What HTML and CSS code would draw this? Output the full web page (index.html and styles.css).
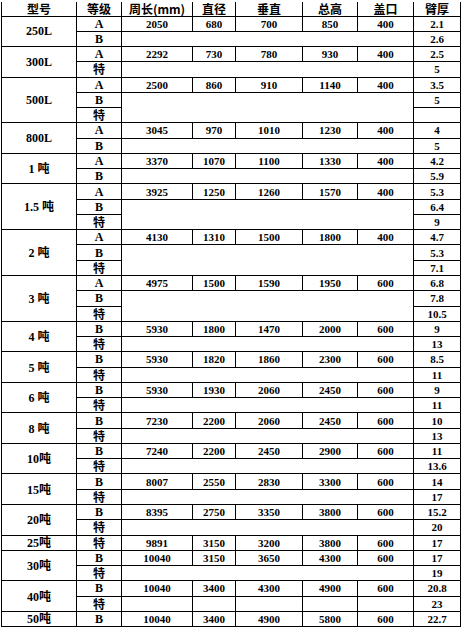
FILE: index.html
```html
<!DOCTYPE html>
<html lang="zh">
<head>
<meta charset="utf-8">
<title>规格表</title>
<link rel="stylesheet" href="styles.css">
</head>
<body>
<table class="spec">
<colgroup>
<col class="c1"><col class="c2"><col class="c3"><col class="c4"><col class="c5"><col class="c6"><col class="c7"><col class="c8">
</colgroup>
<thead>
<tr class="head"><th>型号</th><th>等级</th><th>周长(mm)</th><th>直径</th><th>垂直</th><th>总高</th><th>盖口</th><th>臂厚</th></tr>
</thead>
<tbody>
<tr><td class="m" rowspan="2">250L</td><td class="g">A</td><td>2050</td><td>680</td><td>700</td><td>850</td><td>400</td><td>2.1</td></tr>
<tr><td class="g">B</td><td colspan="5"></td><td>2.6</td></tr>

<tr><td class="m" rowspan="2">300L</td><td class="g">A</td><td>2292</td><td>730</td><td>780</td><td>930</td><td>400</td><td>2.5</td></tr>
<tr><td class="g t">特</td><td colspan="5"></td><td>5</td></tr>

<tr><td class="m" rowspan="3">500L</td><td class="g">A</td><td>2500</td><td>860</td><td>910</td><td>1140</td><td>400</td><td>3.5</td></tr>
<tr><td class="g">B</td><td colspan="5" rowspan="2"></td><td>5</td></tr>
<tr><td class="g t">特</td><td></td></tr>

<tr><td class="m" rowspan="2">800L</td><td class="g">A</td><td>3045</td><td>970</td><td>1010</td><td>1230</td><td>400</td><td>4</td></tr>
<tr><td class="g">B</td><td colspan="5"></td><td>5</td></tr>

<tr><td class="m" rowspan="2">1 <span class="t">吨</span></td><td class="g">A</td><td>3370</td><td>1070</td><td>1100</td><td>1330</td><td>400</td><td>4.2</td></tr>
<tr><td class="g">B</td><td colspan="5"></td><td>5.9</td></tr>

<tr><td class="m" rowspan="3">1.5 <span class="t">吨</span></td><td class="g">A</td><td>3925</td><td>1250</td><td>1260</td><td>1570</td><td>400</td><td>5.3</td></tr>
<tr><td class="g">B</td><td colspan="5" rowspan="2"></td><td>6.4</td></tr>
<tr><td class="g t">特</td><td>9</td></tr>

<tr><td class="m" rowspan="3">2 <span class="t">吨</span></td><td class="g">A</td><td>4130</td><td>1310</td><td>1500</td><td>1800</td><td>400</td><td>4.7</td></tr>
<tr><td class="g">B</td><td colspan="5" rowspan="2"></td><td>5.3</td></tr>
<tr><td class="g t">特</td><td>7.1</td></tr>

<tr><td class="m" rowspan="3">3 <span class="t">吨</span></td><td class="g">A</td><td>4975</td><td>1500</td><td>1590</td><td>1950</td><td>600</td><td>6.8</td></tr>
<tr><td class="g">B</td><td colspan="5" rowspan="2"></td><td>7.8</td></tr>
<tr><td class="g t">特</td><td>10.5</td></tr>

<tr><td class="m" rowspan="2">4 <span class="t">吨</span></td><td class="g">B</td><td>5930</td><td>1800</td><td>1470</td><td>2000</td><td>600</td><td>9</td></tr>
<tr><td class="g t">特</td><td colspan="5"></td><td>13</td></tr>

<tr><td class="m" rowspan="2">5 <span class="t">吨</span></td><td class="g">B</td><td>5930</td><td>1820</td><td>1860</td><td>2300</td><td>600</td><td>8.5</td></tr>
<tr><td class="g t">特</td><td colspan="5"></td><td>11</td></tr>

<tr><td class="m" rowspan="2">6 <span class="t">吨</span></td><td class="g">B</td><td>5930</td><td>1930</td><td>2060</td><td>2450</td><td>600</td><td>9</td></tr>
<tr><td class="g t">特</td><td colspan="5"></td><td>11</td></tr>

<tr><td class="m" rowspan="2">8 <span class="t">吨</span></td><td class="g">B</td><td>7230</td><td>2200</td><td>2060</td><td>2450</td><td>600</td><td>10</td></tr>
<tr><td class="g t">特</td><td colspan="5"></td><td>13</td></tr>

<tr><td class="m" rowspan="2">10<span class="t">吨</span></td><td class="g">B</td><td>7240</td><td>2200</td><td>2450</td><td>2900</td><td>600</td><td>11</td></tr>
<tr><td class="g t">特</td><td colspan="5"></td><td>13.6</td></tr>

<tr><td class="m" rowspan="2">15<span class="t">吨</span></td><td class="g">B</td><td>8007</td><td>2550</td><td>2830</td><td>3300</td><td>600</td><td>14</td></tr>
<tr><td class="g t">特</td><td colspan="5"></td><td>17</td></tr>

<tr><td class="m" rowspan="2">20<span class="t">吨</span></td><td class="g">B</td><td>8395</td><td>2750</td><td>3350</td><td>3800</td><td>600</td><td>15.2</td></tr>
<tr><td class="g t">特</td><td colspan="5"></td><td>20</td></tr>

<tr><td class="m">25<span class="t">吨</span></td><td class="g t">特</td><td>9891</td><td>3150</td><td>3200</td><td>3800</td><td>600</td><td>17</td></tr>

<tr><td class="m" rowspan="2">30<span class="t">吨</span></td><td class="g">B</td><td>10040</td><td>3150</td><td>3650</td><td>4300</td><td>600</td><td>17</td></tr>
<tr><td class="g t">特</td><td colspan="5"></td><td>19</td></tr>

<tr><td class="m" rowspan="2">40<span class="t">吨</span></td><td class="g">B</td><td>10040</td><td>3400</td><td>4300</td><td>4900</td><td>600</td><td>20.8</td></tr>
<tr><td class="g t">特</td><td></td><td></td><td></td><td></td><td></td><td>23</td></tr>

<tr><td class="m">50<span class="t">吨</span></td><td class="g">B</td><td>10040</td><td>3400</td><td>4900</td><td>5800</td><td>600</td><td>22.7</td></tr>
</tbody>
</table>
</body>
</html>
```
FILE: styles.css
```css
html, body {
  margin: 0;
  padding: 0;
  background: #ffffff;
}

.spec {
  margin: 2px 0 0 1px;
  width: 460px;
  table-layout: fixed;
  border-collapse: collapse;
  color: #000000;
  font-family: "Liberation Serif", "Noto Sans CJK SC", serif;
  font-weight: 700;
  font-size: 11px;
}

.c1 { width: 75px; }
.c2 { width: 45px; }
.c3 { width: 71px; }
.c4 { width: 43px; }
.c5 { width: 67px; }
.c6 { width: 55px; }
.c7 { width: 56px; }
.c8 { width: 47px; }

.spec th,
.spec td {
  border: 1px solid #000000;
  padding: 0;
  text-align: center;
  vertical-align: middle;
  line-height: 12px;
  white-space: nowrap;
}

.spec th {
  border-top: none;
  font-family: "Noto Sans CJK SC", "Liberation Serif", sans-serif;
  font-size: 12px;
  line-height: 13px;
}

.head {
  height: 14px;
}

.spec tbody tr {
  height: 15.275px;
}

.g {
  font-size: 12px;
}

.t {
  font-family: "Noto Sans CJK SC", sans-serif;
  font-size: 12px;
  line-height: 12px;
}

.m {
  font-size: 12px;
}
```
